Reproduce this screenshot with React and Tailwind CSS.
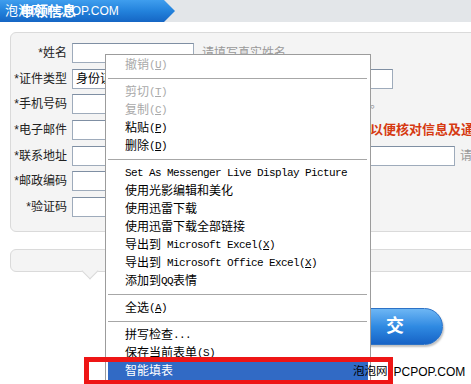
import React from "react";

const CJK = "font-['Liberation_Sans','Noto_Sans_CJK_SC',sans-serif]";
const MONO = "font-['Liberation_Mono','Noto_Sans_CJK_SC',monospace] text-[11px] tracking-[-0.6px]";

const menu = [
  { t: "撤销", k: "U", dis: true },
  "sep",
  { t: "剪切", k: "T", dis: true },
  { t: "复制", k: "C", dis: true },
  { t: "粘贴", k: "P" },
  { t: "删除", k: "D" },
  "sep",
  { l: "Set As Messenger Live Display Picture" },
  { t: "使用光影编辑和美化" },
  { t: "使用迅雷下载" },
  { t: "使用迅雷下载全部链接" },
  { t: "导出到", l: " Microsoft Excel", k: "X" },
  { t: "导出到", l: " Microsoft Office Excel", k: "X" },
  { t: "添加到", l: "QQ", t2: "表情" },
  "sep",
  { t: "全选", k: "A" },
  "sep",
  { t: "拼写检查", l: "..." },
  { t: "保存当前表单", k: "S" },
  { t: "智能填表", active: true },
];

function Input({ w, children }) {
  return (
    <div
      className={`h-[20px] border border-[#9eabbb] border-t-[#7f8fa3] bg-white shrink-0 flex items-center pl-[3px] text-[12px] text-black ${w}`}
    >
      {children}
    </div>
  );
}

function Row({ label, children }) {
  return (
    <div className="flex items-center h-[20px] leading-[20px] whitespace-nowrap">
      <div className="w-[57px] text-right text-[12px] text-[#222] pr-[1px] shrink-0">{label}</div>
      <div className="w-[4px] shrink-0" />
      {children}
    </div>
  );
}

export default function App() {
  return (
    <div className={`relative w-[471px] h-[384px] overflow-hidden bg-white ${CJK}`}>
      {/* header */}
      <div className="h-[22px] bg-[#e3e6e9] flex">
        <div className="relative w-[175px] h-full bg-gradient-to-b from-[#3f9eee] via-[#2382dc] to-[#1566c4] [clip-path:polygon(0_0,164px_0,175px_50%,164px_100%,0_100%)]">
          <div className="absolute left-[5px] top-0 h-[22px] flex items-center text-white whitespace-nowrap">
            <span className="text-[13px]">泡泡网</span>
            <span className="text-[12px] ml-[3px]">PCPOP.COM</span>
          </div>
          <div className="absolute left-[20px] top-0 h-[22px] flex items-center text-white font-bold text-[14px] whitespace-nowrap">
            申领信息
          </div>
        </div>
        <div className="flex-1" />
      </div>

      {/* form panel */}
      <div className="mt-[10px] ml-[10px] w-[480px] h-[200px] border border-[#dadada] rounded-[6px] bg-[#f4f4f4] pt-[10px] flex flex-col gap-[5.67px]">
        <Row label="*姓名">
          <Input w="w-[122px]" />
          <span className="ml-[8px] text-[12px] text-[#999]">请填写真实姓名</span>
        </Row>
        <Row label="*证件类型">
          <Input w="w-[100px]">身份证</Input>
          <div className="ml-[118px]">
            <Input w="w-[103px]" />
          </div>
        </Row>
        <Row label="*手机号码">
          <Input w="w-[122px]" />
          <span className="ml-[8px] text-[12px] text-[#999]">请填写真实的手机号码以便联系。</span>
        </Row>
        <Row label="*电子邮件">
          <Input w="w-[122px]" />
          <span className="ml-[7px] text-[13px] font-bold text-[#d63a12]">请务必填写真实的电子邮箱，以便核对信息及通知您</span>
        </Row>
        <Row label="*联系地址">
          <Input w="w-[383px]" />
          <span className="ml-[5px] text-[12px] text-[#999]">请填写详细地址</span>
        </Row>
        <Row label="*邮政编码">
          <Input w="w-[122px]" />
        </Row>
        <Row label="*验证码">
          <Input w="w-[122px]" />
        </Row>
      </div>

      {/* second panel with notch */}
      <div className="relative mt-[17px] ml-[10px] w-[480px] h-[23px] border border-[#dadada] rounded-[6px] bg-[#f4f4f4]">
        <div className="absolute left-[73px] top-[15px] w-[12px] h-[12px] rotate-45 bg-[#f4f4f4] border-r border-b border-[#dadada]" />
      </div>

      {/* submit button */}
      <div className="mt-[36px] ml-[318px] w-[125px] h-[37px] rounded-full border border-[#2c72c6] bg-gradient-to-b from-[#6db6f4] via-[#2f8ae2] to-[#1763c6] shadow-[1px_2px_2px_rgba(0,0,0,0.25)] flex items-center justify-end gap-[26px] pr-[38px] text-white font-bold text-[18px]">
        <span>提</span>
        <span>交</span>
      </div>

      {/* context menu */}
      <div className="absolute left-[105px] top-[54px] w-[266px] h-[340px] bg-white border border-[#9c9c9c] pt-[1px] text-[12px]">
        {menu.map((m, i) =>
          m === "sep" ? (
            <div key={i} className="h-[9px] pt-[4px] pl-[2px] pr-[3px]">
              <div className="h-[1px] bg-[#a7a7a7]" />
            </div>
          ) : (
            <div
              key={i}
              className={`h-[18px] flex items-center whitespace-nowrap leading-[18px] ${
                m.active ? "mx-[2px] pl-[17px] bg-[#316ac5] text-white" : "pl-[19px]"
              } ${m.dis ? "text-[#a9a9a9]" : m.active ? "" : "text-black"}`}
            >
              {m.t && <span>{m.t}</span>}
              {m.l && <span className={`${MONO} whitespace-pre`}>{m.l}</span>}
              {m.t2 && <span>{m.t2}</span>}
              {m.k && (
                <span className={MONO}>
                  (<u>{m.k}</u>)
                </span>
              )}
            </div>
          )
        )}
      </div>

      {/* red highlight box */}
      <div className="absolute left-[84px] top-[357px] w-[309px] h-[28px] border-[5px] border-[#ee1515]" />

      {/* watermark */}
      <div className="absolute left-[353px] top-[364px] h-[16px] flex items-center text-black whitespace-nowrap">
        <span className="text-[11.5px]">泡泡网</span>
        <span className="text-[12px] ml-[6px]">PCPOP.COM</span>
      </div>
    </div>
  );
}
